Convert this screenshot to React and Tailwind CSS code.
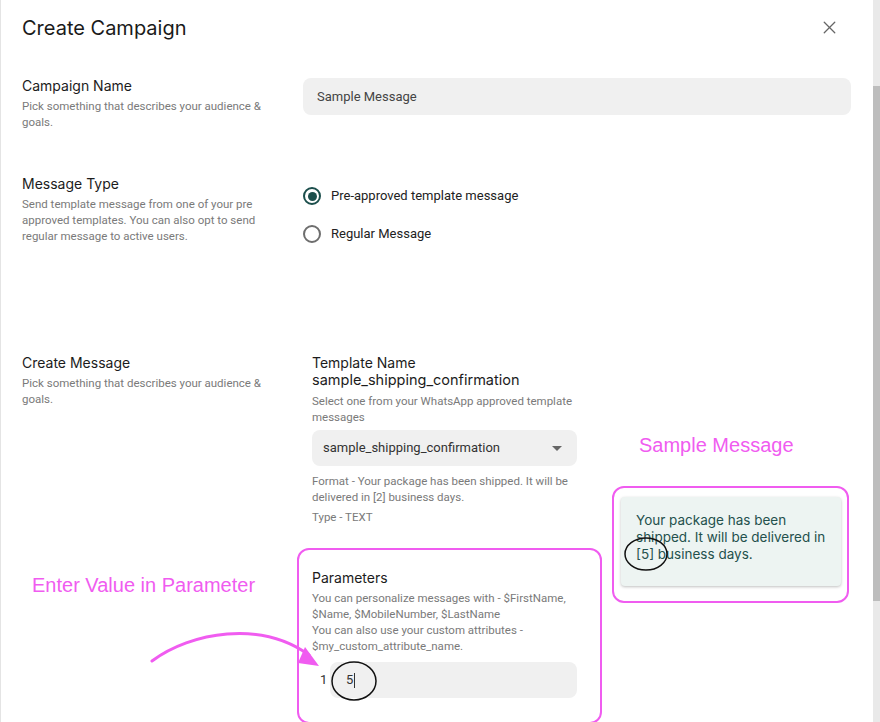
import { X } from 'lucide-react'

const head = { fontFamily: 'Inter, "Open Sans", sans-serif' }
const body = { fontFamily: 'Roboto, "Liberation Sans", sans-serif' }
const note = { fontFamily: '"Liberation Sans", Arial, sans-serif' }

function Radio({ checked, label }) {
  return (
    <label className="flex h-5 items-center gap-[10px]">
      <span
        className={
          'flex h-[18px] w-[18px] items-center justify-center rounded-full border-2 ' +
          (checked ? 'border-[#1c4f4c]' : 'border-[#6e6e6e]')
        }
      >
        {checked && <span className="h-[9px] w-[9px] rounded-full bg-[#1c4f4c]" />}
      </span>
      <span className="text-[13px] text-[#222]" style={body}>{label}</span>
    </label>
  )
}

function SideLabel({ title, children }) {
  return (
    <div className="w-[281px] shrink-0">
      <p className="text-[14px] leading-5 text-[#1c1c1c]" style={head}>{title}</p>
      <p className="mt-[2px] w-[250px] text-[11.5px] leading-4 text-[#7a7a7a]" style={body}>{children}</p>
    </div>
  )
}

export default function App() {
  return (
    <div className="flex h-[722px] w-[880px] overflow-hidden bg-white">
      <div className="relative flex-1 border-l border-[#e4e4e4] pl-[21px] pr-[22px]">
        <div className="flex h-[55px] items-center justify-between">
          <h1 className="text-[20px] leading-7 text-[#1a1a1a]" style={head}>Create Campaign</h1>
          <X size={21} strokeWidth={1.5} className="mr-[11px] text-[#666]" />
        </div>

        <div className="mt-[21px] flex">
          <SideLabel title="Campaign Name">Pick something that describes your audience &amp; goals.</SideLabel>
          <div className="mt-[2px] flex h-[37px] flex-1 items-center rounded-lg bg-[#f0f0f0] px-[14px]">
            <span className="text-[13px] text-[#444]" style={body}>Sample Message</span>
          </div>
        </div>

        <div className="mt-[44px] flex">
          <SideLabel title="Message Type">
            Send template message from one of your pre approved templates. You can also opt to send regular message to active users.
          </SideLabel>
          <div className="flex flex-col gap-[18px] pt-[12px]">
            <Radio checked label="Pre-approved template message" />
            <Radio label="Regular Message" />
          </div>
        </div>

        <div className="mt-[109px] flex">
          <SideLabel title="Create Message">Pick something that describes your audience &amp; goals.</SideLabel>
          <div className="ml-[9px] w-[265px] shrink-0">
            <p className="text-[14px] leading-5 text-[#1c1c1c]" style={head}>Template Name</p>
            <p className="-mt-[3px] text-[14.5px] leading-5 text-[#1c1c1c]" style={head}>sample_shipping_confirmation</p>
            <p className="mt-[3px] text-[11.5px] leading-4 text-[#7a7a7a]" style={body}>
              Select one from your WhatsApp approved template messages
            </p>
            <div className="mt-[5px] flex h-[36px] items-center justify-between rounded-lg bg-[#f0f0f0] pl-[11px] pr-[15px]">
              <span className="text-[13px] text-[#333]" style={body}>sample_shipping_confirmation</span>
              <span className="h-0 w-0 border-x-[5px] border-t-[5px] border-x-transparent border-t-[#666]" />
            </div>
            <p className="mt-[7px] text-[11.5px] leading-4 text-[#7a7a7a]" style={body}>
              Format - Your package has been shipped. It will be delivered in [2] business days.
            </p>
            <p className="mt-[4px] text-[11.5px] leading-4 text-[#7a7a7a]" style={body}>Type - TEXT</p>

            <p className="mt-[43px] text-[14px] leading-5 text-[#1c1c1c]" style={head}>Parameters</p>
            <p className="mt-[2px] text-[11.5px] leading-4 text-[#7a7a7a]" style={body}>
              You can personalize messages with - $FirstName, $Name, $MobileNumber, $LastName
              <br />
              You can also use your custom attributes - $my_custom_attribute_name.
            </p>
            <div className="mt-[8px] flex h-[36px] items-center">
              <span className="w-[18px] pl-[8px] text-[13px] text-[#333]" style={body}>1</span>
              <div className="flex h-full flex-1 items-center rounded-lg bg-[#f0f0f0] pl-[16px]">
                <span className="text-[13px] text-[#333]" style={body}>5</span>
                <span className="ml-px h-[15px] w-px bg-[#333]" />
              </div>
            </div>
          </div>
          <div className="ml-[44px] mt-[144px] h-[89px] w-[220px] shrink-0 rounded bg-[#edf4f2] px-[15px] pt-[15px] shadow-[0_1px_3px_rgba(0,0,0,0.25)]">
            <p className="text-[13.5px] leading-[17px] text-[#24514d]" style={head}>
              Your package has been shipped. It will be delivered in [5] business days.
            </p>
          </div>
        </div>

        <div className="pointer-events-none absolute left-[296px] top-[548px] h-[176px] w-[305px] rounded-xl border-2 border-[#f05cf0]" />
        <div className="pointer-events-none absolute left-[611px] top-[486px] h-[117px] w-[237px] rounded-xl border-2 border-[#f05cf0]" />
        <p className="absolute left-[638px] top-[433px] text-[20px] leading-6 text-[#f05cf0]" style={note}>Sample Message</p>
        <p className="absolute left-[31px] top-[573px] text-[20px] leading-6 text-[#f05cf0]" style={note}>Enter Value in Parameter</p>
        <svg className="pointer-events-none absolute left-0 top-0" width="873" height="722" viewBox="0 0 873 722" fill="none">
          <path d="M151 661 C 190 632, 260 620, 308 655" stroke="#f05cf0" strokeWidth="3" strokeLinecap="round" />
          <path d="M304 647 L318 666 L297 663 Z" fill="#f05cf0" />
          <ellipse cx="645" cy="554" rx="21" ry="16" stroke="#111" strokeWidth="1.5" />
          <ellipse cx="353" cy="681" rx="22" ry="19" stroke="#111" strokeWidth="1.5" />
        </svg>
      </div>
      <div className="w-[7px] shrink-0 bg-[#e9e9e9] pt-[86px]">
        <div className="h-[515px] bg-[#bdbdbd]" />
      </div>
    </div>
  )
}
